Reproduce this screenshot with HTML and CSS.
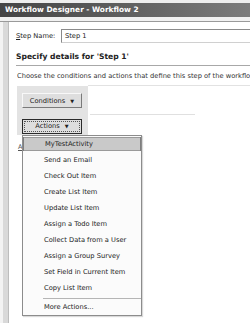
FILE: index.html
```html
<!DOCTYPE html>
<html lang="en">
  <head>
    <meta charset="UTF-8" />
    <title>Workflow Designer</title>
    <link rel="stylesheet" href="styles.css">
  </head>
  <body>
    <div class="top-gap"></div>
    <div class="titlebar">Workflow Designer - Workflow 2</div>
    <div class="title-under"></div>
    <div class="main">
      <div class="side"></div>
      <div class="content">
        <div class="step-row">
          <span class="label"><u>S</u>tep Name:</span>
          <div class="input">Step 1</div>
        </div>
        <div class="heading">Specify details for 'Step 1'</div>
        <p class="desc">Choose the conditions and actions that define this step of the workflow.</p>
        <div class="rules">
          <div class="panel">
            <button class="btn">Conditions <span class="arrow">&#9660;</span></button>
            <button class="btn active"><span class="focus">Actions <span class="arrow">&#9660;</span></span></button>
          </div>
          <div class="rule-area">
            <div class="rule-line"></div>
          </div>
        </div>
        <a class="add-link" href="#">Add workflow step</a>

        <ul class="menu">
          <li class="selected">MyTestActivity</li>
          <li>Send an Email</li>
          <li>Check Out Item</li>
          <li>Create List Item</li>
          <li>Update List Item</li>
          <li>Assign a Todo Item</li>
          <li>Collect Data from a User</li>
          <li>Assign a Group Survey</li>
          <li>Set Field in Current Item</li>
          <li>Copy List Item</li>
          <li class="sep"></li>
          <li>More Actions...</li>
        </ul>
      </div>
    </div>
  </body>
</html>
```

FILE: styles.css
```css
body,
html {
  margin: 0;
  padding: 0;
  height: 100%;
  overflow: hidden;
  background-color: #ffffff;
  font-family: "DejaVu Sans", sans-serif;
  font-size: 6.7px;
  color: #222;
}
.top-gap {
  height: 3px;
  background-color: #eeeeee;
}
.titlebar {
  height: 14px;
  line-height: 14px;
  padding-left: 5px;
  background: linear-gradient(to right, #454545, #5a5a5a 40%, #7c7c7c);
  color: #ffffff;
  font-weight: bold;
  font-size: 7.4px;
}
.title-under {
  height: 4px;
  background-color: #f1f1f1;
  border-bottom: 1px solid #9a9a9a;
}
.main {
  display: flex;
  height: 301px;
}
.side {
  width: 8px;
  background: linear-gradient(to right, #f3f3f3 3px, #d9d9d9 3px);
  border-right: 1px solid #bdbdbd;
}
.content {
  flex: 1;
  position: relative;
  min-width: 0;
}
.step-row {
  display: flex;
  align-items: center;
  margin-top: 7px;
  padding-left: 7px;
  height: 14px;
}
.label {
  width: 45px;
}
.input {
  flex: 1;
  height: 12px;
  line-height: 12px;
  border: 1px solid #8a8a8a;
  border-right: none;
  border-bottom-color: #d0d0d0;
  padding-left: 3px;
}
.heading {
  margin-top: 8px;
  margin-left: 7px;
  line-height: 12px;
  padding-bottom: 2px;
  border-bottom: 1px solid #a8a8a8;
  font-weight: bold;
  font-size: 7.6px;
}
.desc {
  margin: 5px 0 0 8px;
  line-height: 10px;
  white-space: nowrap;
  overflow: hidden;
  color: #333;
}
.rules {
  display: flex;
  margin: 4px 0 0 8px;
}
.panel {
  width: 61px;
  height: 41px;
  padding: 7px 5px 1px 5px;
  margin-top: 1px;
  background-color: #e3e3e3;
  display: flex;
  flex-direction: column;
  gap: 11px;
}
.btn {
  width: 60px;
  height: 15px;
  padding: 0;
  font-family: inherit;
  font-size: 6.7px;
  color: #222;
  background-color: #dedede;
  border: 1px solid;
  border-color: #f8f8f8 #7a7a7a #7a7a7a #f8f8f8;
}
.btn.active {
  border: 1px solid #2a2a2a;
  padding: 1px;
}
.focus {
  display: block;
  height: 9px;
  line-height: 9px;
  border: 1px dotted #555;
}
.arrow {
  font-size: 5px;
  margin-left: 3px;
}
.rule-area {
  flex: 1;
  border-top: 1px solid #e2e2e2;
}
.rule-line {
  width: 105px;
  margin: 28px 0 0 2px;
  border-top: 1px solid #e0e0e0;
}
.add-link {
  display: block;
  margin: 8px 0 0 9px;
  color: #555;
  font-size: 6.5px;
}
.menu {
  position: absolute;
  left: 13px;
  top: 113px;
  width: 118px;
  margin: 0;
  padding: 0;
  list-style: none;
  background-color: #fbfbfb;
  border: 1px solid #8c8c8c;
  box-shadow: 1px 1px 1px rgba(0, 0, 0, 0.15);
}
.menu li {
  height: 16px;
  line-height: 16px;
  padding-left: 21px;
  white-space: nowrap;
}
.menu li.selected {
  height: 14px;
  line-height: 14px;
  margin: 1px 0;
  background-color: #c9c9c9;
  border: 1px solid #7e7e7e;
  border-width: 0 1px;
  box-shadow: inset 0 1px 0 #9a9a9a, inset 0 -1px 0 #9a9a9a;
}
.menu li.sep {
  height: 0;
  margin: 2px 0 0 20px;
  padding: 0;
  border-top: 1px solid #b5b5b5;
}
```
